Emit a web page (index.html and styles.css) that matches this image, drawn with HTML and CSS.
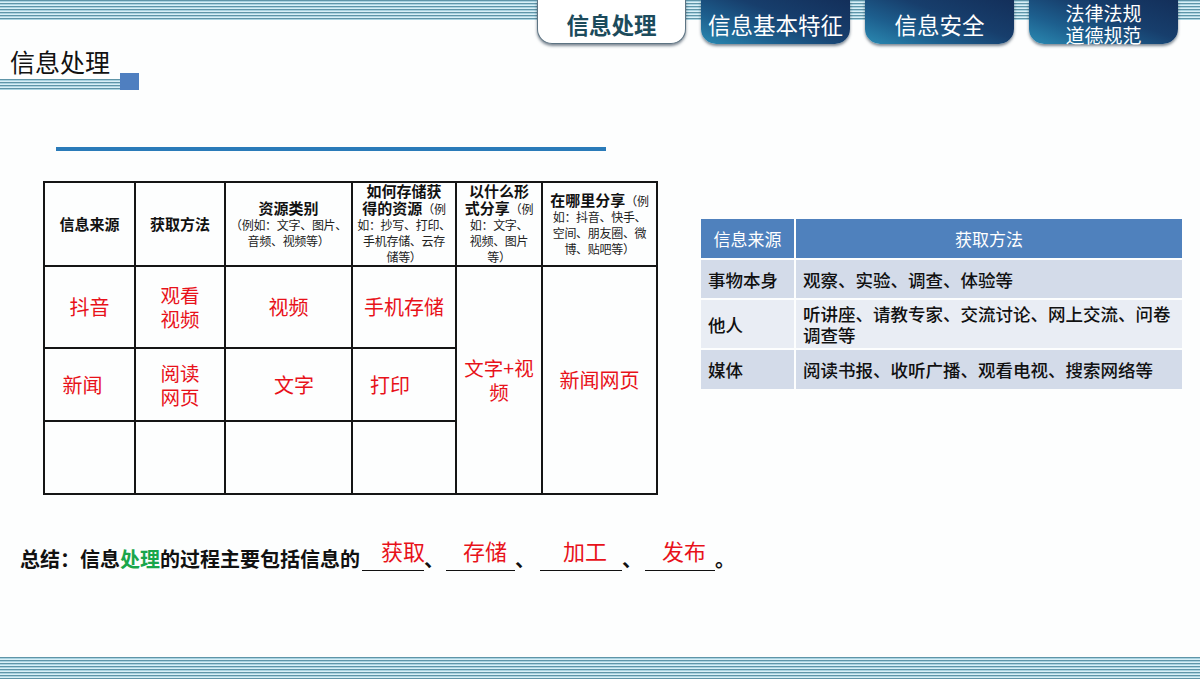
FILE: index.html
```html
<!DOCTYPE html>
<html lang="zh-CN">
<head>
<meta charset="utf-8">
<title>信息处理</title>
<link rel="stylesheet" href="styles.css">
</head>
<body>
<div class="page">
  <header class="topbar">
    <nav class="tabs">
      <a class="tab tab-active">信息处理</a>
      <a class="tab">信息基本特征</a>
      <a class="tab">信息安全</a>
      <a class="tab tab-two">法律法规<br>道德规范</a>
    </nav>
  </header>

  <div class="title-block">
    <h1 class="page-title">信息处理</h1>
    <div class="title-deco"><span class="deco-stripes"></span><span class="deco-square"></span></div>
  </div>

  <div class="rule"></div>

  <main class="content">
    <table class="src-table">
      <colgroup>
        <col class="c1"><col class="c2"><col class="c3"><col class="c4"><col class="c5"><col class="c6">
      </colgroup>
      <thead>
        <tr class="head-row">
          <th><b class="hd">信息来源</b></th>
          <th><b class="hd">获取方法</b></th>
          <th><b class="hd">资源类别</b><br><span class="note">（例如：文字、图片、<br>音频、视频等）</span></th>
          <th><b class="hd">如何存储获<br>得的资源</b><span class="note">（例<br>如：抄写、打印、<br>手机存储、云存<br>储等）</span></th>
          <th><b class="hd">以什么形<br>式分享</b><span class="note">（例<br>如：文字、<br>视频、图片<br>等）</span></th>
          <th><b class="hd">在哪里分享</b><span class="note">（例<br>如：抖音、快手、<br>空间、朋友圈、微<br>博、贴吧等）</span></th>
        </tr>
      </thead>
      <tbody>
        <tr class="r1">
          <td>抖音</td>
          <td class="two-line">观看<br>视频</td>
          <td>视频</td>
          <td>手机存储</td>
          <td rowspan="3" class="two-line">文字+视<br>频</td>
          <td rowspan="3">新闻网页</td>
        </tr>
        <tr class="r2">
          <td class="nudge-left">新闻</td>
          <td class="two-line">阅读<br>网页</td>
          <td class="nudge-right">文字</td>
          <td class="nudge-left2">打印</td>
        </tr>
        <tr class="r3">
          <td></td><td></td><td></td><td></td>
        </tr>
      </tbody>
    </table>

    <div class="method-table">
      <div class="mh">信息来源</div>
      <div class="mh mh-center">获取方法</div>
      <div class="mc dark">事物本身</div>
      <div class="mc dark">观察、实验、调查、体验等</div>
      <div class="mc light tall">他人</div>
      <div class="mc light tall">听讲座、请教专家、交流讨论、网上交流、问卷<br>调查等</div>
      <div class="mc dark">媒体</div>
      <div class="mc dark">阅读书报、收听广播、观看电视、搜索网络等</div>
    </div>
  </main>

  <p class="summary">总结：信息<span class="green">处理</span>的过程主要包括信息的<span class="blank b1"><span class="ans">获取</span></span>、<span class="blank b2"><span class="ans">存储</span></span>、<span class="blank b3"><span class="ans">加工</span></span>、<span class="blank b4"><span class="ans">发布</span></span>。</p>

  <footer class="bottom-stripes"></footer>
</div>
</body>
</html>
```

FILE: styles.css
```css
body {
  margin: 0;
  background: #fdfefe;
  font-family: "Noto Sans CJK SC", "Noto Sans", sans-serif;
  color: #111;
}

.page {
  width: 1200px;
  height: 679px;
  display: flex;
  flex-direction: column;
  overflow: hidden;
}

/* ---------- top bar ---------- */
.topbar {
  height: 46px;
  flex: none;
  background: repeating-linear-gradient(to bottom, #5f95a8 0 1px, #a9d3e1 1px 2px, #d9eff6 2px 3px) top left / 100% 20px no-repeat;
  padding-left: 537px;
  display: flex;
}

.tabs {
  display: flex;
  gap: 15px;
}

.tab {
  width: 149px;
  height: 44px;
  box-sizing: border-box;
  padding-top: 4px;
  display: flex;
  align-items: center;
  justify-content: center;
  text-align: center;
  border-radius: 0 0 15px 15px;
  color: #fff;
  font-size: 22.5px;
  line-height: 24px;
  background: linear-gradient(20deg, #2b8ab2 0%, #1d5f8e 30%, #173e6c 60%, #132f5a 100%);
  box-shadow: 0 2px 3px rgba(20, 40, 60, 0.55);
}

.tab-active {
  background: #fff;
  color: #1c4b5c;
  font-weight: 700;
  border: 1.5px solid #5d7483;
  border-top: none;
}

.tab-two {
  font-size: 19px;
  line-height: 22px;
  padding-top: 3px;
}

/* ---------- title ---------- */
.title-block {
  flex: none;
}

.page-title {
  margin: 2px 0 0 10px;
  font-size: 25px;
  font-weight: 400;
  line-height: 26px;
  color: #111;
}

.title-deco {
  display: flex;
  align-items: flex-end;
  margin-top: -1px;
  height: 17px;
}

.deco-stripes {
  width: 120px;
  height: 11px;
  background: repeating-linear-gradient(to bottom, #5f95a8 0 1px, #a9d3e1 1px 2px, #d9eff6 2px 3px);
}

.deco-square {
  width: 19px;
  height: 17px;
  background: #4f7fc0;
}

.rule {
  flex: none;
  margin: 57px 0 0 56px;
  width: 550px;
  height: 4px;
  background: #2a7bb9;
}

/* ---------- content ---------- */
.content {
  flex: none;
  display: flex;
  align-items: flex-start;
  margin-top: 30px;
}

.src-table {
  margin-left: 43px;
  width: 613px;
  border-collapse: collapse;
  table-layout: fixed;
  border: 2px solid #151515;
}

.c1 { width: 91px; }
.c2 { width: 90px; }
.c3 { width: 127px; }
.c4 { width: 104px; }
.c5 { width: 86px; }
.c6 { width: 115px; }

.src-table th,
.src-table td {
  border: 2px solid #151515;
  padding: 0;
  text-align: center;
  vertical-align: middle;
}

.src-table th {
  font-weight: 400;
  font-size: 12px;
  line-height: 16px;
  color: #222;
}

.hd {
  font-size: 15px;
  font-weight: 700;
  color: #111;
}

.note {
  font-size: 12px;
  letter-spacing: -0.3px;
}

.head-row { height: 84px; }
.r1 { height: 82px; }
.r2 { height: 73px; }
.r3 { height: 73px; }

.src-table td {
  color: #e8121a;
  font-size: 20px;
  line-height: 24px;
}

.src-table td.two-line {
  font-size: 19.5px;
}

.src-table td.nudge-left { padding-right: 14px; }
.src-table td.nudge-right { padding-left: 11px; }
.src-table td.nudge-left2 { padding-right: 28px; }

/* ---------- method table ---------- */
.method-table {
  margin: 38px 0 0 43px;
  display: grid;
  grid-template-columns: 93px 386px;
  grid-template-rows: 39px 38px 48px 39px;
  gap: 2px;
}

.mh {
  background: #4f81bd;
  color: #fff;
  font-size: 17px;
  display: flex;
  align-items: center;
  justify-content: center;
}

.mc {
  font-size: 17.5px;
  line-height: 21px;
  display: flex;
  align-items: center;
  padding-left: 7px;
  color: #111;
  font-weight: 500;
}

.dark { background: #d3dbe9; }
.light { background: #e9edf4; }

/* ---------- summary ---------- */
.summary {
  flex: none;
  margin: 46px 0 0 20px;
  font-size: 20px;
  font-weight: 700;
  line-height: 28px;
  color: #111;
  white-space: nowrap;
}

.green {
  color: #1aa64b;
}

.blank {
  display: inline-block;
  box-sizing: border-box;
  border-bottom: 1.5px solid #111;
  line-height: 26px;
  height: 30px;
  vertical-align: 3px;
  text-align: left;
}

.ans {
  color: #e8121a;
  font-size: 22px;
  font-weight: 400;
  position: relative;
  top: -4px;
}

.b1 { width: 62px; padding-left: 19px; margin-left: 2px; }
.b2 { width: 69px; padding-left: 17px; margin-left: 2px; }
.b3 { width: 82px; padding-left: 23px; margin-left: 5px; }
.b4 { width: 70px; padding-left: 17px; margin-left: 3px; }

/* ---------- bottom ---------- */
.bottom-stripes {
  margin-top: auto;
  flex: none;
  height: 22px;
  background: repeating-linear-gradient(to bottom, #5f95a8 0 1px, #a9d3e1 1px 2px, #d9eff6 2px 3px);
}
```
